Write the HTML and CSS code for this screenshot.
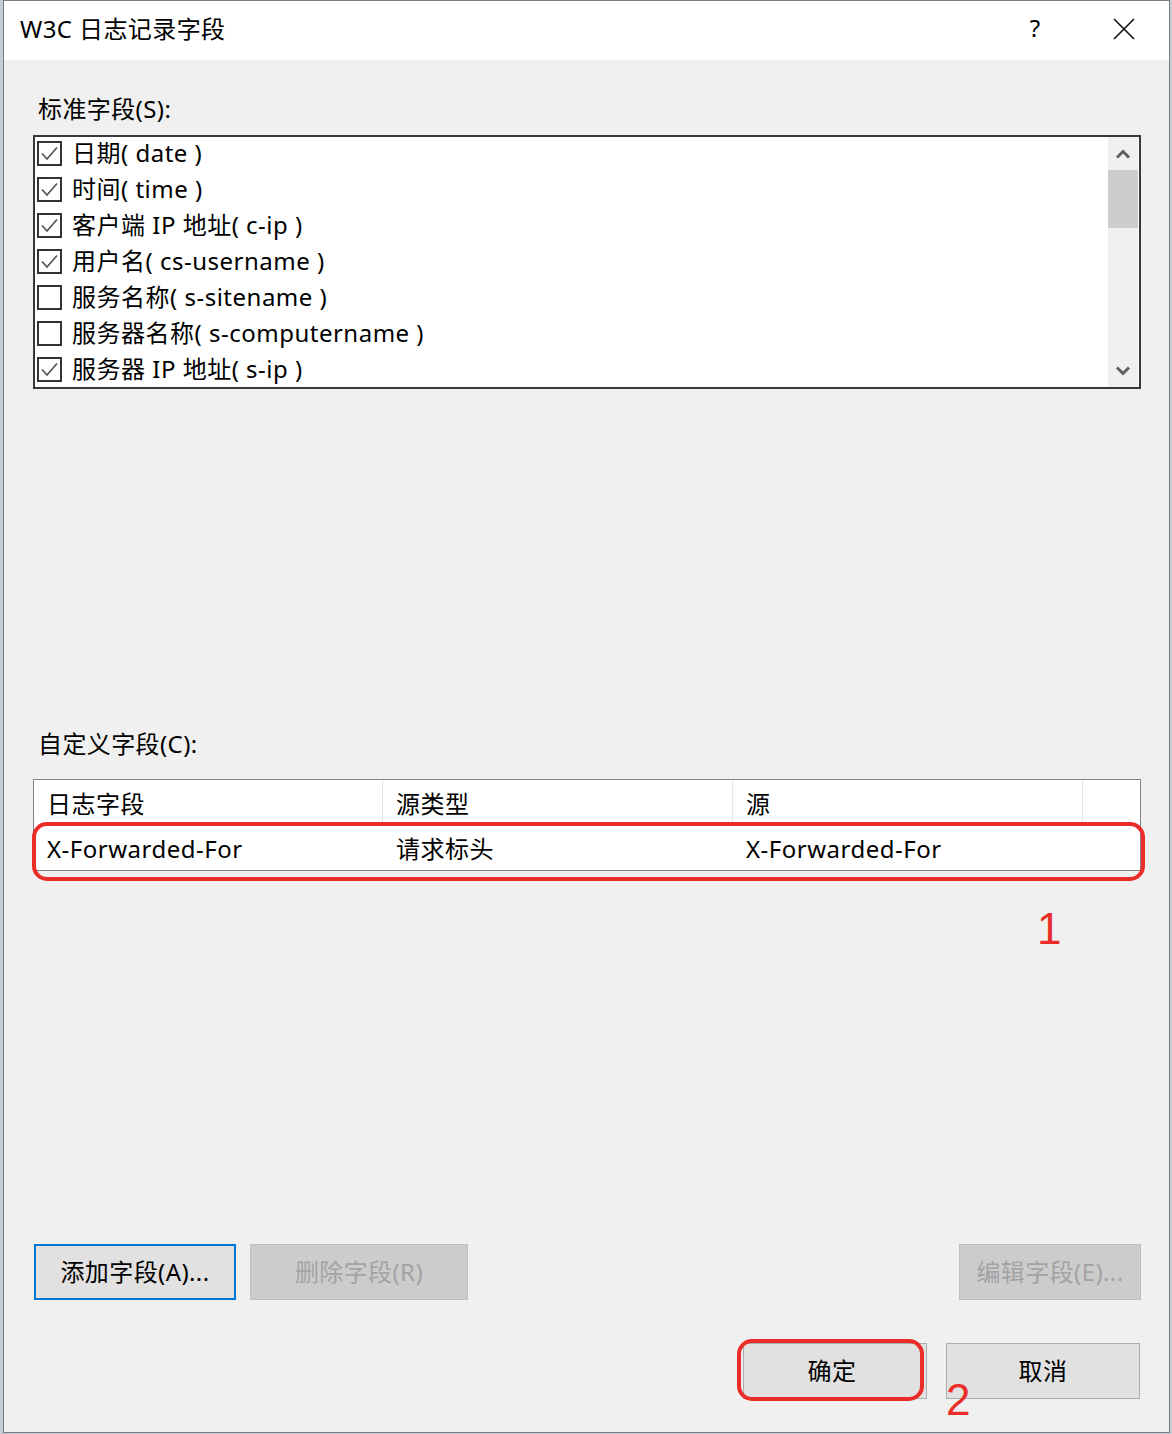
FILE: index.html
```html
<!DOCTYPE html>
<html lang="zh-CN">
<head>
<meta charset="utf-8">
<title>W3C 日志记录字段</title>
<link rel="stylesheet" href="styles.css">
</head>
<body>
<div class="window">
  <div class="titlebar">
    <span class="title">W3C 日志记录字段</span>
    <span class="help">?</span>
    <span class="close">
      <svg width="22" height="22" viewBox="0 0 22 22"><path d="M1 1 L21 21 M21 1 L1 21" stroke="#111" stroke-width="1.6" fill="none"/></svg>
    </span>
  </div>
  <div class="content">
    <div class="label label-std">标准字段(S):</div>
    <div class="listbox">
      <div class="items">
        <div class="item"><span class="cb"><svg width="25" height="25" viewBox="0 0 25 25"><rect x="1" y="1" width="23" height="23" fill="#fff" stroke="#333" stroke-width="2"/><path d="M5 12.5 L10 18 L20 6.5" stroke="#555" stroke-width="1.7" fill="none"/></svg></span><span class="txt">日期( date )</span></div>
        <div class="item"><span class="cb"><svg width="25" height="25" viewBox="0 0 25 25"><rect x="1" y="1" width="23" height="23" fill="#fff" stroke="#333" stroke-width="2"/><path d="M5 12.5 L10 18 L20 6.5" stroke="#555" stroke-width="1.7" fill="none"/></svg></span><span class="txt">时间( time )</span></div>
        <div class="item"><span class="cb"><svg width="25" height="25" viewBox="0 0 25 25"><rect x="1" y="1" width="23" height="23" fill="#fff" stroke="#333" stroke-width="2"/><path d="M5 12.5 L10 18 L20 6.5" stroke="#555" stroke-width="1.7" fill="none"/></svg></span><span class="txt">客户端 IP 地址( c-ip )</span></div>
        <div class="item"><span class="cb"><svg width="25" height="25" viewBox="0 0 25 25"><rect x="1" y="1" width="23" height="23" fill="#fff" stroke="#333" stroke-width="2"/><path d="M5 12.5 L10 18 L20 6.5" stroke="#555" stroke-width="1.7" fill="none"/></svg></span><span class="txt">用户名( cs-username )</span></div>
        <div class="item"><span class="cb"><svg width="25" height="25" viewBox="0 0 25 25"><rect x="1" y="1" width="23" height="23" fill="#fff" stroke="#333" stroke-width="2"/></svg></span><span class="txt">服务名称( s-sitename )</span></div>
        <div class="item"><span class="cb"><svg width="25" height="25" viewBox="0 0 25 25"><rect x="1" y="1" width="23" height="23" fill="#fff" stroke="#333" stroke-width="2"/></svg></span><span class="txt">服务器名称( s-computername )</span></div>
        <div class="item"><span class="cb"><svg width="25" height="25" viewBox="0 0 25 25"><rect x="1" y="1" width="23" height="23" fill="#fff" stroke="#333" stroke-width="2"/><path d="M5 12.5 L10 18 L20 6.5" stroke="#555" stroke-width="1.7" fill="none"/></svg></span><span class="txt">服务器 IP 地址( s-ip )</span></div>
      </div>
      <div class="scrollbar">
        <div class="sb-btn"><svg width="16" height="10" viewBox="0 0 16 10"><path d="M2 8.5 L8 2.5 L14 8.5" stroke="#606060" stroke-width="3" fill="none"/></svg></div>
        <div class="sb-track"><div class="sb-thumb"></div></div>
        <div class="sb-btn"><svg width="16" height="10" viewBox="0 0 16 10"><path d="M2 1.5 L8 7.5 L14 1.5" stroke="#606060" stroke-width="3" fill="none"/></svg></div>
      </div>
    </div>

    <div class="label label-custom">自定义字段(C):</div>
    <div class="lv-wrap">
      <div class="listview">
        <div class="lv-head">
          <div class="lv-cell">日志字段</div>
          <div class="lv-cell">源类型</div>
          <div class="lv-cell">源</div>
          <div class="lv-cell lv-fill"></div>
        </div>
        <div class="lv-row">
          <div class="lv-cell">X-Forwarded-For</div>
          <div class="lv-cell">请求标头</div>
          <div class="lv-cell">X-Forwarded-For</div>
          <div class="lv-cell lv-fill"></div>
        </div>
      </div>
      <div class="mark mark-row"></div>
      <div class="num num-1">1</div>
    </div>

    <div class="btn-row btn-row-edit">
      <button class="btn btn-focus">添加字段(A)...</button>
      <button class="btn btn-disabled btn-del">删除字段(R)</button>
      <button class="btn btn-disabled btn-edit">编辑字段(E)...</button>
    </div>
    <div class="btn-row btn-row-dialog">
      <button class="btn btn-ok">确定</button>
      <button class="btn btn-cancel">取消</button>
      <div class="mark mark-ok"></div>
      <div class="num num-2">2</div>
    </div>
  </div>
</div>
</body>
</html>
```

FILE: styles.css
```css
* { box-sizing: border-box; }

html, body {
  margin: 0;
  padding: 0;
}

body {
  width: 1172px;
  height: 1434px;
  background: #c5ccd6;
  font-family: "Noto Sans", "Noto Sans CJK SC", sans-serif;
  color: #000;
  overflow: hidden;
}

.window {
  margin-left: 3px;
  width: 1167px;
  height: 1433px;
  border: 1px solid #7c7c7c;
  background: #f0f0f0;
  display: flex;
  flex-direction: column;
}

.titlebar {
  height: 59px;
  flex: none;
  background: #fff;
  display: flex;
  align-items: center;
}

.title {
  padding-left: 16px;
  font-size: 24px;
  letter-spacing: 0.4px;
  line-height: 30px;
  margin-top: -4px;
}

.help {
  margin-left: auto;
  width: 46px;
  margin-right: 43px;
  text-align: center;
  font-size: 24px;
  line-height: 30px;
  margin-top: -5px;
}

.close {
  width: 46px;
  margin-right: 22px;
  display: flex;
  justify-content: center;
  margin-top: -4px;
}

.close svg { display: block; }

.content {
  flex: 1;
  display: flex;
  flex-direction: column;
  padding: 0 28px 33px 29px;
}

.label {
  font-size: 24px;
  letter-spacing: 0.4px;
  line-height: 30px;
  padding-left: 5px;
}

.label-std { margin-top: 34px; }
.label-custom { margin-top: 340px; }

.listbox {
  margin-top: 11px;
  height: 254px;
  border: 2px solid #383838;
  background: #fff;
  display: flex;
  overflow: hidden;
}

.items {
  flex: 1;
  margin-top: -2px;
}

.item {
  height: 36px;
  display: flex;
  align-items: center;
  padding-left: 2px;
}

.cb {
  width: 25px;
  height: 25px;
  flex: none;
}

.cb svg { display: block; }

.txt {
  margin-left: 10px;
  font-size: 24px;
  letter-spacing: 0.5px;
  line-height: 30px;
  margin-top: -1px;
}

.scrollbar {
  width: 30px;
  margin-right: 1px;
  background: #f0f0f0;
  display: flex;
  flex-direction: column;
}

.sb-btn {
  height: 33px;
  display: flex;
  align-items: center;
  justify-content: center;
}

.sb-btn svg { display: block; }

.sb-track {
  flex: 1;
}

.sb-thumb {
  height: 58px;
  background: #cdcdcd;
}

.lv-wrap {
  position: relative;
  margin-top: 20px;
}

.listview {
  height: 92px;
  border: 1px solid #828282;
  background: #fff;
}

.lv-head, .lv-row {
  display: flex;
}

.lv-head { height: 47px; }
.lv-row { height: 43px; }

.lv-cell {
  width: 350px;
  flex: none;
  padding-left: 13px;
  font-size: 24px;
  letter-spacing: 0.5px;
  line-height: 30px;
  display: flex;
  align-items: center;
  white-space: nowrap;
}

.lv-head .lv-cell {
  border-right: 1px solid #e5e5e5;
}

.lv-head .lv-cell:first-child,
.lv-row .lv-cell:first-child { width: 349px; }

.lv-fill { flex: 1; width: auto; }
.lv-head .lv-fill { border-right: none; }

.mark {
  position: absolute;
  border: 4px solid #ea2d28;
  border-radius: 15px;
  pointer-events: none;
}

.mark-row {
  left: -1px;
  top: 43px;
  width: 1113px;
  height: 59px;
}

.num {
  position: absolute;
  font-family: "Liberation Sans", Arial, sans-serif;
  font-size: 44px;
  line-height: 44px;
  color: #ea2d28;
}

.num-1 {
  left: 1004px;
  top: 128px;
}

.btn-row {
  display: flex;
  height: 56px;
  position: relative;
}

.btn-row-edit { margin-top: auto; }
.btn-row-dialog { margin-top: 43px; }

.btn {
  height: 56px;
  font-family: "Noto Sans", "Noto Sans CJK SC", sans-serif;
  font-size: 24px;
  letter-spacing: 0.4px;
  line-height: 30px;
  color: #000;
  background: #e1e1e1;
  border: 1px solid #adadad;
  padding: 0;
  margin: 0;
}

.btn-focus {
  width: 202px;
  margin-left: 1px;
  border: 2px solid #0078d7;
}

.btn-disabled {
  background: #cccccc;
  border-color: #bfbfbf;
  color: #a3a3a3;
}

.btn-del {
  width: 218px;
  margin-left: 14px;
}

.btn-edit {
  width: 182px;
  margin-left: auto;
}

.btn-ok {
  width: 184px;
  margin-left: 710px;
  padding-right: 6px;
}

.btn-cancel {
  width: 194px;
  margin-left: 19px;
}

.mark-ok {
  left: 704px;
  top: -4px;
  width: 187px;
  height: 62px;
}

.num-2 {
  left: 913px;
  top: 35px;
}
```
